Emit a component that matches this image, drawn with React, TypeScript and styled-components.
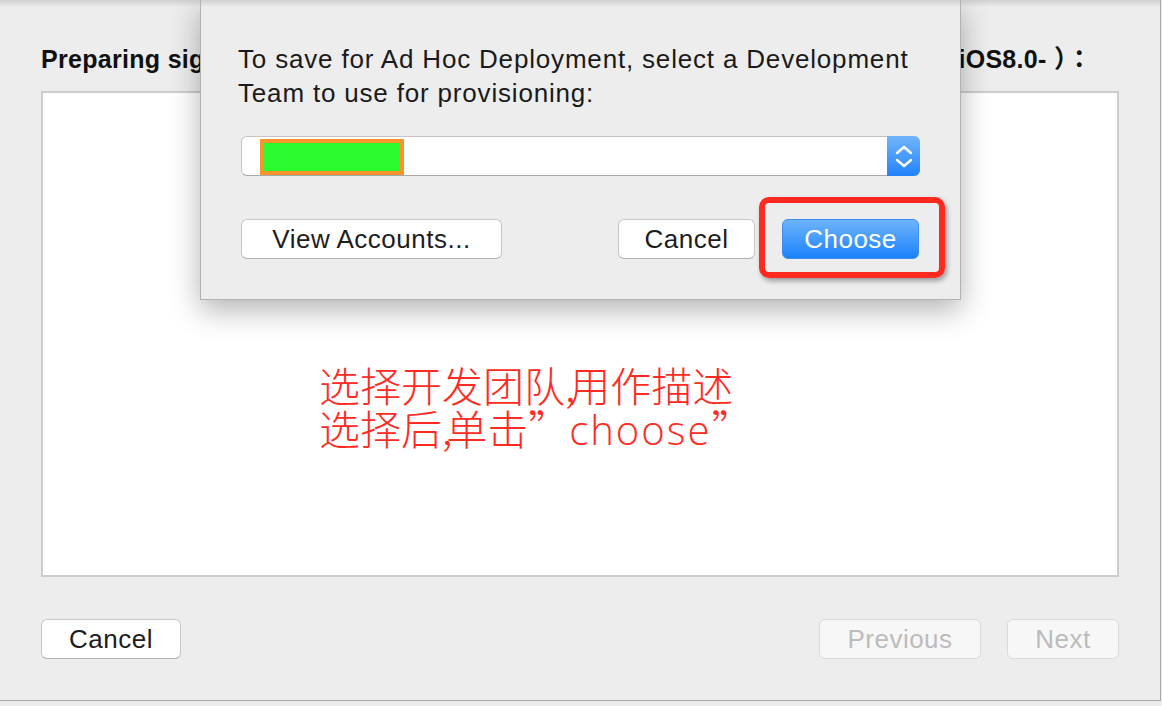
import React from 'react';
import styled, { createGlobalStyle } from 'styled-components';

const GlobalStyle = createGlobalStyle`
  html, body {
    margin: 0;
    padding: 0;
  }

  body {
    width: 1162px;
    height: 706px;
    overflow: hidden;
    background: #ebebeb;
    font-family: "Liberation Sans", Arial, sans-serif;
  }
`;

const Window = styled.div`
  position: relative;
  box-sizing: border-box;
  width: 1161px;
  height: 701px;
  padding: 44px 41px 41px 41px;
  display: flex;
  flex-direction: column;
  background: linear-gradient(#d0d0d0, #ededed 7px);
  border-right: 1px solid #a9a9a9;
  border-bottom: 1px solid #a9a9a9;
`;

const Heading = styled.h1`
  margin: 0;
  height: 30px;
  padding-right: 27px;
  display: flex;
  justify-content: space-between;
  font-size: 25px;
  line-height: 30px;
  font-weight: bold;
  letter-spacing: 0.3px;
  color: #111;
  white-space: pre;
`;

const HeadingTail = styled.span`
  font-family: "Liberation Sans", "Noto Sans CJK TC", sans-serif;
`;

const Pane = styled.div`
  box-sizing: border-box;
  height: 486px;
  margin-top: 17px;
  padding: 270px 0 0 276px;
  background: #fff;
  border: 2px solid #cdcdcd;
`;

const Note = styled.p`
  margin: 0;
  color: #ff2b22;
  font-family: "Noto Sans CJK SC", sans-serif;
  font-size: 41px;
  line-height: 43px;
  font-weight: 300;
  white-space: nowrap;
`;

const Comma = styled.span`
  margin-right: -6px;
`;

const Word = styled.span`
  font-family: "Open Sans", sans-serif;
  font-size: 40px;
  font-weight: 300;
  letter-spacing: 2px;
`;

const Footer = styled.div`
  margin-top: 42px;
  display: flex;
  justify-content: space-between;
`;

const Group = styled.div<{ $gap: number }>`
  display: flex;
  gap: ${p => p.$gap}px;
`;

type Variant = 'normal' | 'primary' | 'disabled';

const Button = styled.button<{ $variant?: Variant; $width: number }>`
  box-sizing: border-box;
  width: ${p => p.$width}px;
  height: 40px;
  padding: 0;
  border-radius: 6px;
  font-family: "Liberation Sans", Arial, sans-serif;
  font-size: 26px;
  letter-spacing: 0.5px;
  cursor: default;
  ${p =>
    p.$variant === 'primary'
      ? `
    color: #fff;
    background: linear-gradient(#6db4fb, #1b82fb);
    border: 1px solid #3d8cf0;
  `
      : p.$variant === 'disabled'
      ? `
    color: #bcbcbc;
    background: #f7f7f7;
    border: 1px solid #dadada;
  `
      : `
    color: #1d1d1d;
    background: #fff;
    border: 1px solid #c7c7c7;
    border-bottom-color: #b0b0b0;
  `}
`;

const Sheet = styled.div`
  position: absolute;
  left: 200px;
  top: 0;
  box-sizing: border-box;
  width: 761px;
  height: 300px;
  padding: 42px 40px 40px 40px;
  background: linear-gradient(#d0d0d0, #ededed 7px);
  border: 1px solid #b2b2b2;
  border-top: none;
  box-shadow: 0 10px 28px rgba(0, 0, 0, 0.3);
`;

const Message = styled.p`
  margin: 0 0 0 -3px;
  font-size: 26px;
  line-height: 34px;
  letter-spacing: 0.82px;
  color: #1a1a1a;
`;

const Popup = styled.div`
  box-sizing: border-box;
  height: 40px;
  margin-top: 26px;
  display: flex;
  background: #fff;
  border: 1px solid #c4c4c4;
  border-bottom-color: #a9a9a9;
  border-radius: 6px;
`;

const Masked = styled.span`
  box-sizing: border-box;
  width: 144px;
  height: 36px;
  margin: 2px 0 0 18px;
  background: #2bfa2f;
  border: 4px solid #f7942c;
`;

const Stepper = styled.span`
  width: 33px;
  height: 40px;
  margin: -1px -1px -1px auto;
  border-radius: 0 6px 6px 0;
  background: linear-gradient(#70b5fa, #2283fb);
`;

const Actions = styled.div`
  margin-top: 43px;
  display: flex;
  align-items: center;
`;

const Push = styled.div`
  margin-left: auto;
  margin-right: 1px;
  display: flex;
  gap: 27px;
`;

const Marked = styled.span`
  position: relative;
  display: flex;
`;

const Highlight = styled.span`
  position: absolute;
  left: -23px;
  top: -22px;
  box-sizing: border-box;
  width: 186px;
  height: 81px;
  border: 6px solid #ff2a1f;
  border-radius: 10px;
  box-shadow: 2px 3px 5px rgba(0, 0, 0, 0.35);
  pointer-events: none;
`;

const App = () => {
  return (
    <>
      <GlobalStyle />
      <Window>
        <Heading>
          <span>Preparing signing identities for Ad Hoc</span>
          <HeadingTail>（iOS8.0- ）：</HeadingTail>
        </Heading>
        <Pane>
          <Note>
            选择开发团队<Comma>,</Comma>用作描述
            <br />
            选择后<Comma>,</Comma>单击”<Word>choose</Word>”
          </Note>
        </Pane>
        <Footer>
          <Button $width={140}>Cancel</Button>
          <Group $gap={26}>
            <Button $width={162} $variant="disabled">Previous</Button>
            <Button $width={112} $variant="disabled">Next</Button>
          </Group>
        </Footer>

        <Sheet>
          <Message>
            To save for Ad Hoc Deployment, select a Development
            <br />
            Team to use for provisioning:
          </Message>
          <Popup>
            <Masked />
            <Stepper>
              <svg width="33" height="40" viewBox="0 0 33 40" fill="none" stroke="#fff" strokeWidth="2.4" strokeLinecap="round" strokeLinejoin="round">
                <path d="M10 17 L17 11 L24 17" />
                <path d="M10 24 L17 30 L24 24" />
              </svg>
            </Stepper>
          </Popup>
          <Actions>
            <Button $width={261}>View Accounts...</Button>
            <Push>
              <Button $width={137}>Cancel</Button>
              <Marked>
                <Button $width={137} $variant="primary">Choose</Button>
                <Highlight />
              </Marked>
            </Push>
          </Actions>
        </Sheet>
      </Window>
    </>
  );
};

export default App;
